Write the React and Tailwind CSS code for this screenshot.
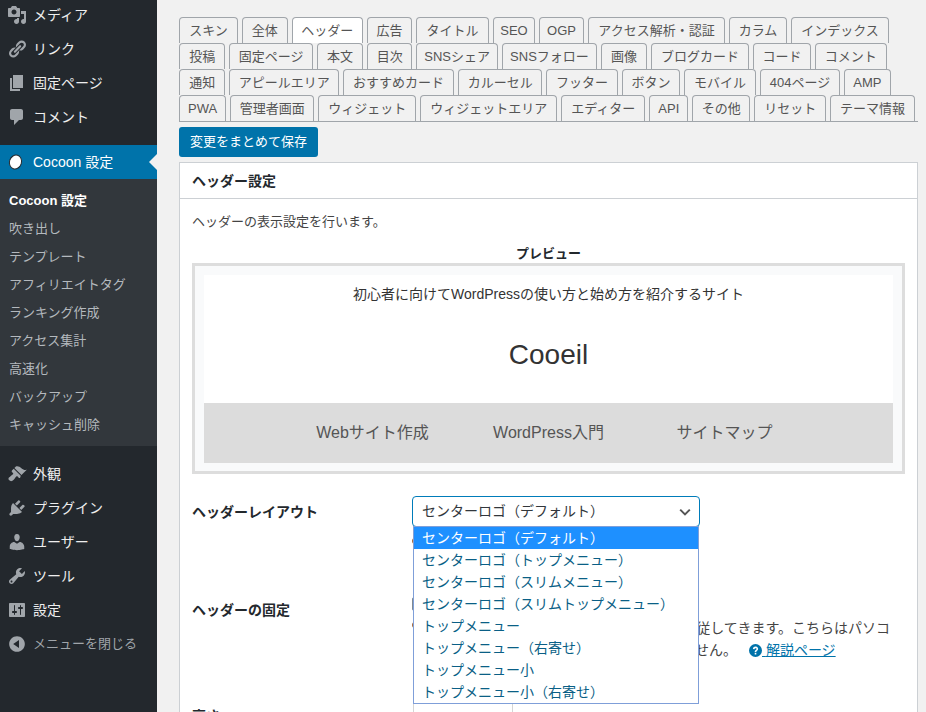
import React from 'react';

const menuTop = [
    { label: 'メディア', d: 'M13 11V4c0-.55-.45-1-1-1h-1.67L9 1H5L3.67 3H2c-.55 0-1 .45-1 1v7c0 .55.45 1 1 1h10c.55 0 1-.45 1-1zM7 4.5c1.38 0 2.5 1.12 2.5 2.5S8.38 9.5 7 9.5 4.5 8.38 4.5 7 5.62 4.5 7 4.5zM14 6h5v10.5c0 1.38-1.12 2.5-2.5 2.5S14 17.88 14 16.5s1.12-2.5 2.5-2.5c.17 0 .34.02.5.05V9h-3V6zm-4 8.05V13h2v3.5c0 1.38-1.12 2.5-2.5 2.5S7 17.88 7 16.5 8.12 14 9.5 14c.17 0 .34.02.5.05z' },
    { label: 'リンク', d: 'M17.74 2.76c1.68 1.69 1.68 4.41 0 6.1l-1.53 1.52c-1.12 1.12-2.7 1.47-4.14 1.09l2.62-2.61.76-.77.76-.76c.84-.84.84-2.2 0-3.04-.84-.85-2.2-.85-3.04 0l-.77.76-3.38 3.38c-.37-1.44-.02-3.02 1.1-4.14l1.52-1.53c1.69-1.68 4.42-1.68 6.1 0zM8.59 13.43l5.34-5.34c.42-.42.42-1.1 0-1.52-.44-.43-1.13-.39-1.53 0l-5.33 5.34c-.42.42-.42 1.1 0 1.52.44.43 1.13.39 1.52 0zm-.76 2.29l4.14-4.15c.38 1.44.03 3.02-1.09 4.14l-1.52 1.53c-1.69 1.68-4.41 1.68-6.1 0-1.68-1.68-1.68-4.42 0-6.1l1.53-1.52c1.12-1.12 2.7-1.47 4.14-1.1l-4.14 4.15c-.85.84-.85 2.2 0 3.05.84.84 2.2.84 3.04 0z' },
    { label: '固定ページ', d: 'M6 15V2h10v13H6zm-1 1h8v2H3V5h2v11z' },
    { label: 'コメント', d: 'M5 2h9c1.1 0 2 .9 2 2v7c0 1.1-.9 2-2 2h-2l-5 5v-5H5c-1.1 0-2-.9-2-2V4c0-1.1.9-2 2-2z' },
];

const menuBottom = [
    { label: '外観', d: 'M14.48 11.06L7.41 3.99l1.5-1.5c.5-.56 2.3-.47 3.51.32 1.21.8 1.43 1.28 2.91 2.1 1.18.64 2.45 1.26 4.45.85zm-.71.71L6.7 4.7 4.93 6.47c-.39.39-.39 1.02 0 1.41l1.06 1.06c.39.39.39 1.03 0 1.42-.6.6-1.43 1.11-2.21 1.69-.35.26-.7.53-1.01.84C1.43 13.23.91 15 2.26 16.35c1.34 1.35 3.11.82 4.45-.53.31-.31.58-.66.85-1.02.57-.78 1.08-1.61 1.69-2.21.39-.39 1.02-.39 1.41 0l1.06 1.06c.39.39 1.02.39 1.41 0z' },
    { label: 'プラグイン', d: 'M13.11 4.36L9.87 7.6 8 5.73l3.24-3.24c.35-.34 1.05-.2 1.56.32.52.51.66 1.21.31 1.55zm-8 1.77l.91-1.12 9.01 9.01-1.19.84c-.71.71-2.63 1.16-3.82 1.16H6.14L4.9 17.26c-.59.59-1.54.59-2.12 0-.59-.58-.59-1.53 0-2.12l1.24-1.24v-3.88c0-1.13.4-3.19 1.09-3.89zm7.26 3.97l3.24-3.24c.34-.35 1.04-.21 1.55.31.52.51.66 1.21.31 1.55l-3.24 3.25z' },
    { label: 'ユーザー', d: 'M10 9.25c-2.27 0-2.73-3.44-2.73-3.44C7 4.02 7.82 2 9.97 2c2.16 0 2.98 2.02 2.71 3.81 0 0-.41 3.44-2.68 3.44zm0 2.57L12.72 10c2.39 0 4.52 2.33 4.52 4.53v2.49s-3.65 1.13-7.24 1.13c-3.65 0-7.24-1.13-7.24-1.13v-2.49c0-2.25 1.94-4.48 4.47-4.48z' },
    { label: 'ツール', d: 'M16.68 9.77c-1.34 1.34-3.3 1.67-4.95.99l-5.41 6.52c-.99.99-2.59.99-3.58 0s-.99-2.59 0-3.57l6.52-5.42c-.68-1.65-.35-3.61.99-4.95 1.28-1.28 3.12-1.62 4.72-1.06l-2.89 2.89 2.82 2.82 2.86-2.87c.53 1.58.18 3.39-1.08 4.65zM3.81 16.21c.4.39 1.04.39 1.43 0 .4-.4.4-1.04 0-1.43-.39-.4-1.03-.4-1.43 0-.39.39-.39 1.03 0 1.43z' },
    { label: '設定', d: 'M18 16V4c0-.55-.45-1-1-1H3c-.55 0-1 .45-1 1v12c0 .55.45 1 1 1h14c.55 0 1-.45 1-1zM8 11h1c.55 0 1 .45 1 1s-.45 1-1 1H8v1.5c0 .28-.22.5-.5.5s-.5-.22-.5-.5V13H6c-.55 0-1-.45-1-1s.45-1 1-1h1V5.5c0-.28.22-.5.5-.5s.5.22.5.5V11zm5-2h-1c-.55 0-1-.45-1-1s.45-1 1-1h1V5.5c0-.28.22-.5.5-.5s.5.22.5.5V7h1c.55 0 1 .45 1 1s-.45 1-1 1h-1v5.5c0 .28-.22.5-.5.5s-.5-.22-.5-.5V9z' },
];

const subMenu = ['吹き出し', 'テンプレート', 'アフィリエイトタグ', 'ランキング作成', 'アクセス集計', '高速化', 'バックアップ', 'キャッシュ削除'];

const tabRows = [
    [
        ['スキン', 'w-[59px]'], ['全体', 'w-[45.5px]'], ['ヘッダー', 'w-[71.5px]'], ['広告', 'w-[45px]'], ['タイトル', 'w-[73px]'],
        ['SEO', 'w-[42px]'], ['OGP', 'w-[45px]'], ['アクセス解析・認証', 'w-[137px]'], ['カラム', 'w-[58px]'], ['インデックス', 'w-[98px]'],
    ],
    [
        ['投稿', 'w-[46.3px]'], ['固定ページ', 'w-[83.7px]'], ['本文', 'w-[46px]'], ['目次', 'w-[45.3px]'], ['SNSシェア', 'w-[81.7px]'],
        ['SNSフォロー', 'w-[95px]'], ['画像', 'w-[46px]'], ['ブログカード', 'w-[98px]'], ['コード', 'w-[58px]'], ['コメント', 'w-[71.7px]'],
    ],
    [
        ['通知', 'w-[46.3px]'], ['アピールエリア', 'w-[109.7px]'], ['おすすめカード', 'w-[111px]'], ['カルーセル', 'w-[84.3px]'], ['フッター', 'w-[71.7px]'],
        ['ボタン', 'w-[58px]'], ['モバイル', 'w-[72px]'], ['404ページ', 'w-[80px]'], ['AMP', 'w-[46.7px]'],
    ],
    [
        ['PWA', 'w-[47.3px]'], ['管理者画面', 'w-[84px]'], ['ウィジェット', 'w-[98px]'], ['ウィジェットエリア', 'w-[137px]'], ['エディター', 'w-[84px]'],
        ['API', 'w-[39px]'], ['その他', 'w-[58px]'], ['リセット', 'w-[72px]'], ['テーマ情報', 'w-[84.4px]'],
    ],
];

const options = [
    'センターロゴ（デフォルト）',
    'センターロゴ（トップメニュー）',
    'センターロゴ（スリムメニュー）',
    'センターロゴ（スリムトップメニュー）',
    'トップメニュー',
    'トップメニュー（右寄せ）',
    'トップメニュー小',
    'トップメニュー小（右寄せ）',
];

const MenuRow = ({ item }) => (
    <div className="flex items-center h-[34px] pl-[7px] text-[14px] text-[#eeeeee]">
        <svg viewBox="0 0 20 20" className="w-5 h-5 fill-[#a0a5aa] shrink-0"><path d={item.d} /></svg>
        <span className="ml-[6px]">{item.label}</span>
    </div>
);

const Sidebar = () => (
    <aside className="w-[157px] shrink-0 bg-[#23282d] h-full overflow-hidden">
        {/* top items start a little above the window, the page was scrolled */}
        <div className="-mt-[2px] mb-[11px]">
            {menuTop.map(item => <MenuRow key={item.label} item={item} />)}
        </div>

        <div className="relative flex items-center h-[34px] bg-[#0073aa] pl-[8px] text-[14px] text-white">
            <svg viewBox="0 0 15 16" className="w-[15px] h-[16px] shrink-0">
                <ellipse cx="7.500" cy="8" rx="6" ry="7" transform="rotate(18 7.500 8)" className="fill-white stroke-[#23282d]" />
            </svg>
            <span className="ml-[10px]">Cocoon 設定</span>
            <span className="absolute right-0 top-[9px] border-y-[8px] border-y-transparent border-r-[8px] border-r-[#f1f1f1]"></span>
        </div>

        <div className="bg-[#32373c] pt-[8px] pb-[7px] text-[13px] mb-[11px]">
            <div className="h-[28px] flex items-center pl-[9px] font-bold text-white">Cocoon 設定</div>
            {subMenu.map(label => (
                <div key={label} className="h-[28px] flex items-center pl-[9px] text-[#b4b9be]">{label}</div>
            ))}
        </div>

        {menuBottom.map(item => <MenuRow key={item.label} item={item} />)}
        <div className="flex items-center h-[34px] pl-[7px] text-[13px] text-[#a0a5aa]">
            <svg viewBox="0 0 20 20" className="w-5 h-5 fill-[#a0a5aa] shrink-0"><path d="M10 2.16c4.33 0 7.84 3.51 7.84 7.84s-3.51 7.84-7.84 7.84S2.16 14.33 2.16 10 5.71 2.16 10 2.16zm2 11.72V6.12L6.18 9.97z" /></svg>
            <span className="ml-[6px]">メニューを閉じる</span>
        </div>
    </aside>
);

const Tabs = () => (
    <div className="w-[739px] border-b border-[#a0a5aa]">
        {tabRows.map((row, i) => (
            <div key={i} className="flex gap-x-[4px] h-[26px]">
                {row.map(([label, w]) => (
                    <div
                        key={label}
                        className={`${w} h-[26px] pt-[1px] shrink-0 flex items-center justify-center border border-b-0 border-[#a0a5aa] rounded-t-[4px] text-[13px] text-[#555555] ${label === 'ヘッダー' ? 'bg-white' : 'bg-[#f1f1f1]'}`}
                    >
                        {label}
                    </div>
                ))}
            </div>
        ))}
    </div>
);

const Preview = () => (
    <div className="border-[3px] border-[#dddddd] bg-[#f9fafb] p-[9px] pb-[8px]">
        <div className="bg-white h-[128px] flex flex-col items-center text-[#333333]">
            <div className="text-[14px] leading-[20px] mt-[9px]">初心者に向けてWordPressの使い方と始め方を紹介するサイト</div>
            <div className="text-[28px] leading-[32px] mt-[35px]">Cooeil</div>
        </div>
        <div className="bg-[#dcdcdc] h-[60px] flex items-center justify-center text-[16px] text-[#555555]">
            <div className="w-[176px] text-center">Webサイト作成</div>
            <div className="w-[176px] text-center">WordPress入門</div>
            <div className="w-[176px] text-center">サイトマップ</div>
        </div>
    </div>
);

const HeaderLayoutRow = () => (
    <div className="relative flex h-[101px]">
        <div className="w-[220px] shrink-0 pt-[7px] text-[14px] leading-[18px] font-bold text-[#23282d]">ヘッダーレイアウト</div>
        <div className="w-[288px] h-[31px] border border-[#007cba] rounded-[4px] bg-white flex items-center justify-between pl-[9px] pr-[6px] text-[14px] text-[#32373c]">
            <span>{options[0]}</span>
            <svg viewBox="0 0 20 20" className="w-4 h-4 fill-none stroke-[#555555] stroke-[2.5]"><path d="M4 7l6 6 6-6" /></svg>
        </div>
        {/* radio under the open list, only its edge shows */}
        <span className="absolute left-[220px] top-[42px] w-[6px] h-[6px] rounded-full bg-[#a5683a]"></span>
        {/* open select list */}
        <div className="absolute left-[221px] top-[30px] w-[286px] h-[178px] z-10 bg-white border border-[#7f9fd9] text-[14px] leading-[22px] text-[#0a5f86]">
            {options.map((opt, i) => (
                <div key={opt} className={`h-[22px] pl-[8px] whitespace-nowrap ${i === 0 ? 'bg-[#1e90ff] text-white' : ''}`}>{opt}</div>
            ))}
        </div>
    </div>
);

const FixedRow = () => (
    <div className="flex h-[106px]">
        <div className="w-[220px] shrink-0 pt-[4px] text-[14px] leading-[18px] font-bold text-[#23282d]">ヘッダーの固定</div>
        <div className="relative text-[14px] leading-[22px] text-[#444444]">
            <div className="w-[16px] h-[14px] mb-[6px] border border-[#7e8993] rounded-[2px]"></div>
            <span className="absolute left-0 top-[25px] w-[6px] h-[6px] rounded-full bg-[#a5683a]"></span>
            <div className="w-[478px] text-right whitespace-nowrap overflow-hidden">スクロールしてもヘッダーが画面上部に追従してきます。こちらはパソコ</div>
            <div className="flex items-center whitespace-nowrap">
                <span className="w-[325px] text-right overflow-hidden">ンとタブレットで有効です。動作しません。</span>
                <svg viewBox="0 0 16 16" className="w-[13px] h-[13px] ml-[12px] fill-[#0073aa]">
                    <path d="M8 0a8 8 0 1 0 0 16A8 8 0 0 0 8 0zm1 13H7v-2h2v2zm1.900-5.600c-.5.6-1 .9-1.300 1.200-.4.4-.6.7-.6 1.400H7c0-1.200.4-1.800 1-2.300.5-.4 1-.6 1.200-1.100.3-.7-.2-1.400-1.100-1.400-.8 0-1.300.5-1.400 1.300l-1.900-.2C5 3.900 6.300 3 8.100 3c2.400 0 3.900 2.300 2.800 4.400z" />
                </svg>
                <span className="text-[#0073aa] underline">{'\u00a0'}解説ページ</span>
            </div>
        </div>
    </div>
);

const HeightRow = () => (
    <div className="flex h-[30px]">
        <div className="w-[221px] shrink-0 pt-[4px] text-[14px] leading-[18px] font-bold text-[#23282d]">高さ</div>
        <div className="w-[100px] h-[30px] border-x border-[#d5d5d5]"></div>
    </div>
);

export default function App() {
    return (
        <div
            className="flex h-screen overflow-hidden bg-[#f1f1f1]"
            style={{ fontFamily: '"Liberation Sans", "Noto Sans CJK JP", sans-serif' }}
        >
            <Sidebar />
            <main className="flex-1 pl-[22px] pt-[17px]">
                <Tabs />
                <button className="mt-[5px] h-[30px] w-[139px] bg-[#0073aa] rounded-[3px] text-[13px] text-white">変更をまとめて保存</button>
                <section className="mt-[5px] w-[739px] bg-white border border-[#ccd0d4]">
                    <h2 className="h-[36px] pt-[1px] flex items-center pl-[12px] text-[14px] font-bold text-[#23282d] border-b border-[#ccd0d4]">ヘッダー設定</h2>
                    <div className="px-[12px]">
                        <p className="mt-[14px] text-[13px] leading-[18px] text-[#444444]">ヘッダーの表示設定を行います。</p>
                        <div className="mt-[14px] text-center text-[13px] leading-[18px] font-bold text-[#23282d]">プレビュー</div>
                        <Preview />
                        <div className="mt-[22px]">
                            <HeaderLayoutRow />
                            <FixedRow />
                            <HeightRow />
                        </div>
                    </div>
                </section>
            </main>
        </div>
    );
}
